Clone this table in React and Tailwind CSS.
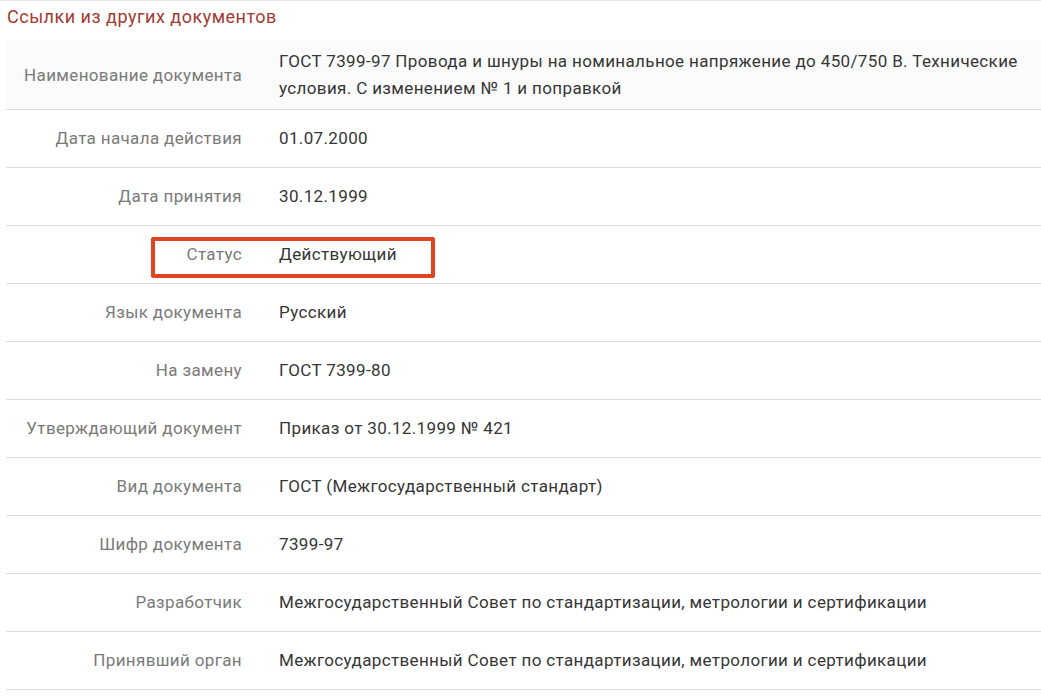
const rows = [
  ['Дата начала действия', '01.07.2000'],
  ['Дата принятия', '30.12.1999'],
  ['Статус', 'Действующий', true],
  ['Язык документа', 'Русский'],
  ['На замену', 'ГОСТ 7399-80'],
  ['Утверждающий документ', 'Приказ от 30.12.1999 № 421'],
  ['Вид документа', 'ГОСТ (Межгосударственный стандарт)'],
  ['Шифр документа', '7399-97'],
  ['Разработчик', 'Межгосударственный Совет по стандартизации, метрологии и сертификации'],
  ['Принявший орган', 'Межгосударственный Совет по стандартизации, метрологии и сертификации'],
];

const Row = ({ label, value, marked }) => (
  <div className="relative grid grid-cols-[236px_1fr] items-center h-[58px] border-b border-[#dedede]">
    <div className="text-right text-[#7a7a7a]">{label}</div>
    <div className="pl-[37px] text-[#363636]">{value}</div>
    {marked && (
      <div className="absolute left-[145px] top-[11px] w-[284px] h-[41px] border-4 border-[#df4322] rounded-[2px]" />
    )}
  </div>
);

export default function App() {
  return (
    <div className="w-[1041px] h-[699px] bg-white overflow-hidden border-t border-[#e6e6e6] font-['Roboto',sans-serif] text-[17px] leading-[27px] tracking-[0.36px]">
      <h2 className="pl-[7px] pt-[2px] h-[40px] text-[18px] tracking-[0.5px] text-[#a33a30]">Ссылки из других документов</h2>
      <div className="ml-[6px]">
        <div className="grid grid-cols-[236px_1fr] items-center h-[69px] bg-[#fbfbfb] border-b border-[#dedede]">
          <div className="text-right text-[#7a7a7a]">Наименование документа</div>
          <div className="pl-[37px] pr-[20px] text-[#363636]">
            ГОСТ 7399-97 Провода и шнуры на номинальное напряжение до 450/750 В. Технические условия. С изменением № 1 и поправкой
          </div>
        </div>
        {rows.map(([label, value, marked]) => (
          <Row key={label} label={label} value={value} marked={marked} />
        ))}
      </div>
    </div>
  );
}
